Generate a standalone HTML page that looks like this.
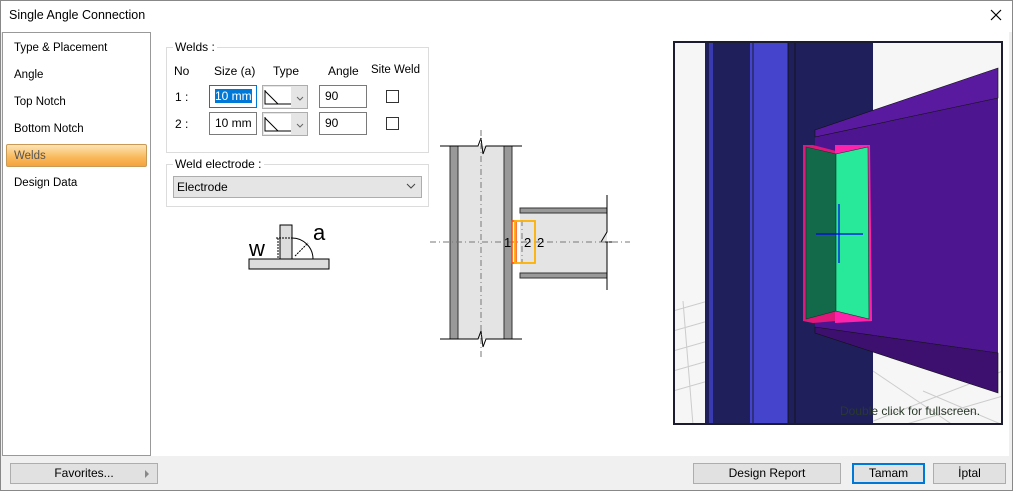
<!DOCTYPE html>
<html><head><meta charset="utf-8"><style>
*{box-sizing:border-box}
body{margin:0;width:1013px;height:491px;position:relative;background:#f0f0f0;font-family:"Liberation Sans",sans-serif;font-size:12px;color:#000;overflow:hidden}
.a{position:absolute}
.btn{position:absolute;background:#e1e1e1;border:1px solid #adadad;text-align:center;font-size:12px;line-height:19px}
.nav div{position:absolute;left:11px;font-size:11.5px}
.inp{position:absolute;background:#fff;border:1px solid #7a7a7a;font-size:12px;line-height:21px;padding-left:5px;height:23px}
.cb{position:absolute;width:13px;height:13px;border:1px solid #333;background:#fff}
.sel{position:absolute;width:46px;height:24px;background:#e5e5e5;border:1px solid #adadad}
</style></head><body>
<div class="a" style="left:0;top:0;width:1013px;height:491px;border:1px solid #888;background:#f0f0f0"></div>
<div class="a" style="left:1px;top:1px;width:1011px;height:31px;background:#fff"></div>
<div class="a" style="left:9px;top:8px;font-size:12.5px">Single Angle Connection</div>
<svg class="a" style="left:990px;top:9px" width="12" height="12"><path d="M1 1L11 11M11 1L1 11" stroke="#000" stroke-width="1.2"/></svg>
<div class="a" style="left:151px;top:32px;width:858px;height:424px;background:#fff"></div>
<div class="a nav" style="left:2px;top:32px;width:149px;height:424px;background:#fff;border:1px solid #999">
<div style="top:9px">Type &amp; Placement</div>
<div style="top:36px">Angle</div>
<div style="top:63px">Top Notch</div>
<div style="top:90px">Bottom Notch</div>
<div style="left:3px;top:111px;width:141px;height:23px;background:linear-gradient(#fde4b5,#f9b85a 60%,#f5a33c);border:1px solid #c99a55;border-radius:2px"></div>
<div style="top:117px;color:#555">Welds</div>
<div style="top:144px">Design Data</div>
</div>
<!-- welds group -->
<div class="a" style="left:166px;top:47px;width:263px;height:106px;border:1px solid #dcdcdc"></div>
<div class="a" style="left:173px;top:40px;background:#fff;padding:0 2px">Welds :</div>
<div class="a" style="left:174px;top:64px">No</div>
<div class="a" style="left:214px;top:64px">Size (a)</div>
<div class="a" style="left:273px;top:64px">Type</div>
<div class="a" style="left:328px;top:64px">Angle</div>
<div class="a" style="left:371px;top:64px;font-size:11.5px">Site Weld</div>
<div class="a" style="left:175px;top:90px">1 :</div>
<div class="a" style="left:175px;top:117px">2 :</div>
<div class="inp" style="left:209px;top:85px;width:48px;border-color:#0078d7"><span style="background:#0078d7;color:#fff">10 mm</span></div>
<div class="inp" style="left:209px;top:112px;width:48px">10 mm</div>
<div class="sel" style="left:262px;top:85px"></div><div class="sel" style="left:262px;top:112px"></div>
<svg class="a" style="left:262px;top:85px" width="46" height="52"><rect x="2" y="2" width="27" height="20" fill="#fff"/><rect x="2" y="29" width="27" height="20" fill="#fff"/><g fill="none" stroke="#000"><path d="M3 5V19H29M3 6L16 19M3 32V46H29M3 33L16 46"/><path d="M35 12l3 3 3-3M35 39l3 3 3-3" stroke="#666"/></g></svg>
<div class="inp" style="left:319px;top:85px;width:48px">90</div>
<div class="inp" style="left:319px;top:112px;width:48px">90</div>
<div class="cb" style="left:386px;top:90px"></div><div class="cb" style="left:386px;top:117px"></div>
<!-- electrode -->
<div class="a" style="left:166px;top:164px;width:263px;height:43px;border:1px solid #dcdcdc"></div>
<div class="a" style="left:173px;top:157px;background:#fff;padding:0 2px">Weld electrode :</div>
<div class="a" style="left:173px;top:176px;width:249px;height:22px;background:#e5e5e5;border:1px solid #adadad;padding-left:3px;line-height:20px">Electrode</div>
<svg class="a" style="left:406px;top:183px" width="10" height="6"><path d="M1 1l4 4 4-4" fill="none" stroke="#444"/></svg>
<!-- weld sketch -->
<svg class="a" style="left:245px;top:220px" width="90" height="52">
<rect x="4" y="39" width="80" height="10" fill="#ddd" stroke="#000"/>
<rect x="35" y="5" width="12" height="34" fill="#ddd" stroke="#000"/>
<path d="M47 18A21 21 0 0 1 68 39" fill="none" stroke="#000"/>
<path d="M31 18H47M31 39H35M33 18V39M50 36L63 23" stroke="#000" stroke-dasharray="2 1" fill="none"/>
<text x="4" y="36" font-size="22" font-family="Liberation Sans">w</text>
<text x="68" y="20" font-size="22" font-family="Liberation Sans">a</text>
</svg>
<!-- 2D drawing -->
<svg class="a" style="left:430px;top:130px" width="200" height="230">
<rect x="20" y="16" width="62" height="193" fill="#e4e4e4"/>
<rect x="20" y="16" width="8" height="193" fill="#999" stroke="#333"/>
<rect x="74" y="16" width="8" height="193" fill="#999" stroke="#333"/>
<path d="M10 16H48l3-8 2 16 3-8H92M10 209H48l3-8 2 16 3-8H92" fill="none" stroke="#000"/>
<rect x="90" y="78" width="87" height="70" fill="#e4e4e4"/>
<rect x="90" y="78" width="87" height="5" fill="#999" stroke="#333"/>
<rect x="90" y="143" width="87" height="5" fill="#999" stroke="#333"/>
<path d="M177 65V102l-6 10 12 0-6 0V160" fill="none" stroke="#000"/>
<path d="M0 112H200M51 0V230M92 90V133" stroke="#777" stroke-dasharray="6 3 1 3" fill="none"/>
<rect x="82" y="91" width="4" height="42" fill="none" stroke="#ff4500" stroke-width="1.5"/>
<rect x="85" y="91" width="20" height="42" fill="none" stroke="#ffb000" stroke-width="1.8"/>
<text x="74" y="117" font-size="13">1</text><text x="94" y="117" font-size="13">2</text><text x="107" y="117" font-size="13">2</text>
</svg>
<!-- 3D view -->
<svg class="a" style="left:673px;top:41px" width="330" height="384">
<rect width="330" height="384" fill="#f6f6f6"/>
<g stroke="#ccc" fill="none"><path d="M0 270L35 260M0 290L35 280M0 310L35 300M0 330L35 320M10 260L20 384M0 350L35 340M190 384L330 330M230 384L330 355M250 350L330 384M200 330L280 384"/></g>
<rect x="32" y="0" width="168" height="384" fill="#1f1f5c"/>
<rect x="36" y="0" width="4" height="384" fill="#3a3ab0"/>
<rect x="77" y="0" width="38" height="384" fill="#4444cc"/>
<path d="M80 0V384M115 0V384M122 0V384" stroke="#111" stroke-width="0.8"/>
<polygon points="142,96 325,57 325,312 142,286" fill="#4e1590"/>
<polygon points="142,89 325,27 325,57 142,96" fill="#5a1aa0" stroke="#111" stroke-width="0.6"/>
<polygon points="142,286 325,312 325,352 142,292" fill="#3d1070" stroke="#111" stroke-width="0.6"/>
<polygon points="130,104 140,104 163,110 163,280 140,282 130,280" fill="#e0187a"/>
<polygon points="162,104 197,104 199,280 162,282" fill="#ff22aa"/>
<polygon points="133,106 163,113 163,270 133,278" fill="#136a4a" stroke="#0a3a28" stroke-width="0.6"/>
<polygon points="163,113 195,106 196,278 163,270" fill="#28e89a" stroke="#0a3a28" stroke-width="0.6"/>
<path d="M143 193H190M166 163V222" stroke="#0000ee" stroke-width="1.2"/>
<text x="167" y="374" font-size="12" fill="#2a3a2a" font-family="Liberation Sans">Double click for fullscreen.</text>
<rect x="1" y="1" width="328" height="382" fill="none" stroke="#1c1c30" stroke-width="2"/>
</svg>
<!-- bottom buttons -->
<div class="btn" style="left:10px;top:463px;width:148px;height:21px">Favorites...</div>
<div class="a" style="left:145px;top:470px;width:0;height:0;border-left:4px solid #888;border-top:4px solid transparent;border-bottom:4px solid transparent"></div>
<div class="btn" style="left:693px;top:463px;width:148px;height:21px">Design Report</div>
<div class="btn" style="left:852px;top:463px;width:73px;height:21px;border:2px solid #0078d7;line-height:17px">Tamam</div>
<div class="btn" style="left:933px;top:463px;width:73px;height:21px">İptal</div>
</body></html>
